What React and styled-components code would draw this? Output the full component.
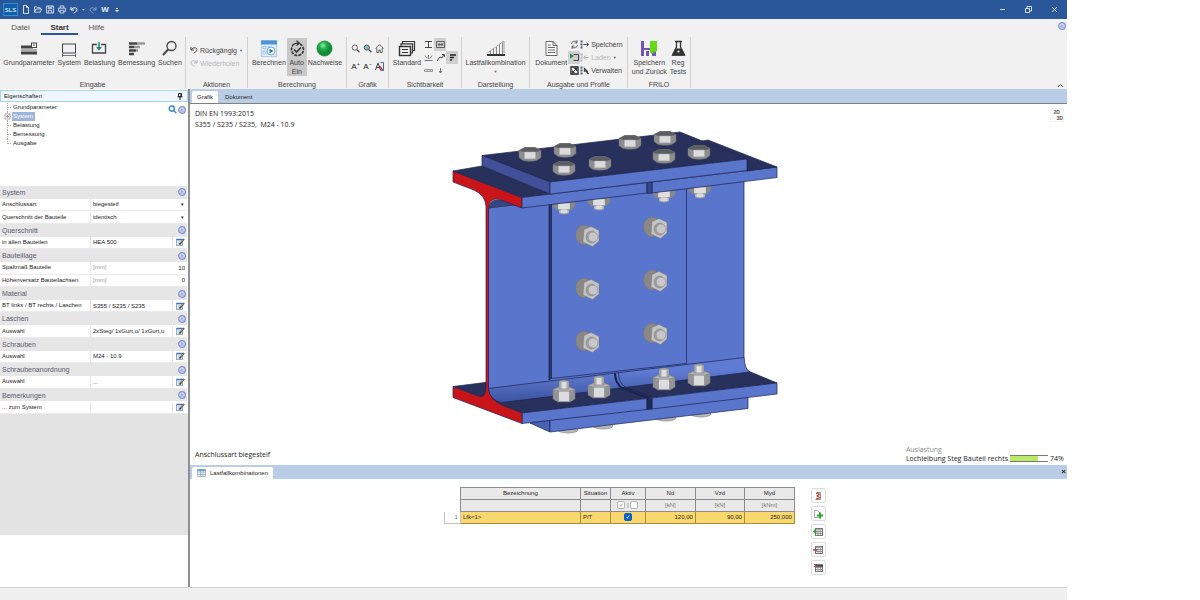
import React from "react";
import styled, { createGlobalStyle } from "styled-components";

const GlobalStyle = createGlobalStyle`
  * {
    box-sizing: border-box;
  }
  body {
    margin: 0;
    background: #ffffff;
    color: #222222;
    font: 6px/9px "Liberation Sans", Arial, sans-serif;
  }
  button, input, select {
    margin: 0;
    padding: 0;
    border: 0;
    border-radius: 0;
    background: transparent;
    color: inherit;
    font: inherit;
  }
  ul {
    margin: 0;
    padding: 0;
    list-style: none;
  }
  svg {
    display: block;
  }
`;

/* ---------- layout ---------- */

const Window = styled.div`
  display: flex;
  flex-direction: column;
  width: 88.9vw;
  min-height: 100vh;
  background: #ffffff;
`;

const TitleBar = styled.header`
  display: flex;
  align-items: center;
  gap: 4px;
  height: 19px;
  padding: 0 4px 0 3px;
  background: #2a579a;
  color: #e8eef8;
`;

const Logo = styled.div`
  width: 15px;
  height: 13px;
  border: 1px solid #2f8fd0;
  background: #0f5fa8;
  color: #ffffff;
  font-size: 6px;
  line-height: 12px;
  text-align: center;
`;

const TitleButton = styled.button`
  display: flex;
  align-items: center;
  justify-content: center;
  width: ${(props) => props.$width || 8}px;
  height: 13px;
  opacity: ${(props) => (props.$faded ? 0.45 : 1)};
  font-size: 8px;
  font-weight: bold;
`;

const WindowButtons = styled.div`
  display: flex;
  margin-left: auto;
`;

const Ribbon = styled.div`
  background: #f1f1f1;
`;

const RibbonTabs = styled.nav`
  display: flex;
  align-items: center;
  height: 17px;
  padding-right: 1px;
`;

const RibbonTab = styled.a`
  width: ${(props) => (props.$active ? 37 : 41)}px;
  height: 15px;
  border-bottom: 2px solid ${(props) => (props.$active ? "#2a579a" : "transparent")};
  color: ${(props) => (props.$active ? "#333333" : "#555555")};
  font-size: 8px;
  font-weight: ${(props) => (props.$active ? "bold" : "normal")};
  line-height: 15px;
  text-align: center;
  text-decoration: none;

  &:last-of-type {
    width: 37px;
  }
`;

const RibbonHelp = styled.button`
  margin: 0 0 3px auto;
`;

const Groups = styled.div`
  display: flex;
  height: 53px;
  padding-top: 1px;
`;

const Group = styled.section`
  display: flex;
  flex-direction: column;
  width: ${(props) => props.$width}px;
  height: 51px;
  border-right: 1px solid #d0d0d0;
`;

const GroupBody = styled.div`
  display: flex;
  flex: 1;
  justify-content: center;
  gap: ${(props) => props.$gap || 0}px;
  padding-top: 1px;
`;

const GroupLabel = styled.div`
  height: 9px;
  margin-bottom: -1px;
  color: #444444;
  font-size: 7px;
  text-align: center;
`;

const BigButton = styled.button`
  display: flex;
  flex-direction: column;
  align-items: center;
  height: 38px;
  padding: 2px 1px 0;
  background: ${(props) => (props.$active ? "#c8c8c8" : "transparent")};
  color: #444444;
  font-size: 7px;
  line-height: 9px;
  white-space: pre;

  svg {
    margin-bottom: 1px;
  }
`;

const ButtonStack = styled.div`
  display: flex;
  flex-direction: column;
  gap: 1px;
  padding-top: ${(props) => props.$top || 0}px;
`;

const SmallButton = styled.button`
  display: flex;
  align-items: center;
  gap: 2px;
  height: 12px;
  color: ${(props) => (props.$faded ? "#b8b8b8" : "#444444")};
  font-size: 7px;
  white-space: pre;
`;

const DropMark = styled.span`
  color: #666666;
  font-size: 4px;
  line-height: 9px;
`;

const IconGrid = styled.div`
  display: grid;
  grid-template-columns: repeat(${(props) => props.$columns}, 12px);
  grid-auto-rows: ${(props) => props.$row || 13}px;
  align-content: start;
  padding-top: ${(props) => props.$top || 0}px;
`;

const IconButton = styled.button`
  display: flex;
  align-items: center;
  justify-content: center;
  background: ${(props) => (props.$active ? "#cfcfcf" : "transparent")};
  font-size: 8px;
`;

const CollapseButton = styled.button`
  align-self: flex-end;
  margin: 0 3px 0 auto;
`;

const Workspace = styled.div`
  display: flex;
  flex: 1;
`;

const Sidebar = styled.aside`
  display: flex;
  flex-direction: column;
  width: 190px;
  border-right: 2px solid #909090;
`;

const SidebarTitle = styled.div`
  display: flex;
  align-items: center;
  justify-content: space-between;
  height: 12px;
  margin-top: 1px;
  padding: 0 4px 0 3px;
  border: 1px solid #a9d4f0;
  background: #eff7fd;
`;

const TreeArea = styled.div`
  display: flex;
  justify-content: space-between;
  height: 84px;
  padding: 1px 2px 0 3px;
`;

const TreeItem = styled.li`
  display: flex;
  align-items: center;
  height: 9px;

  a {
    padding: 0 2px 0 1px;
    background: ${(props) => (props.$open ? "#9fb4dc" : "transparent")};
    color: ${(props) => (props.$open ? "#ffffff" : "inherit")};
    text-decoration: none;
  }
`;

const TreeTools = styled.div`
  display: flex;
  gap: 1px;
  height: 9px;
  margin-top: 2px;
`;

const PropertyList = styled.form`
  display: flex;
  flex-direction: column;
  height: 228px;
  padding-right: 1px;
`;

const SectionHead = styled.div`
  display: flex;
  flex: 9;
  align-items: center;
  justify-content: space-between;
  padding: 0 1px 0 2px;
  background: #e6e6e6;
  color: #5a5a70;
  font-size: 7px;
`;

const PropertyRow = styled.div`
  display: grid;
  flex: 8;
  grid-template-columns: 90px 1fr auto;
  align-items: center;
  border-bottom: 1px solid #eaeaea;

  label {
    padding-left: 2px;
    white-space: nowrap;
  }
`;

const ValueInput = styled.input`
  width: 100%;
  min-width: 0;
  height: 11px;
  padding: 0 2px;
  border-left: 1px solid #e6e6e6;
  text-align: ${(props) => (props.$right ? "right" : "left")};
`;

const ValueSelect = styled.select`
  width: 100%;
  height: 11px;
  padding: 0 2px;
  border-left: 1px solid #e6e6e6;
  appearance: none;
`;

const UnitField = styled.div`
  display: grid;
  grid-template-columns: 24px 1fr;
  align-items: center;
  border-left: 1px solid #e6e6e6;

  span {
    padding-left: 2px;
    color: #999999;
  }
  input {
    border: 0;
  }
`;

const RowButton = styled.button`
  display: flex;
  align-items: center;
  justify-content: center;
  width: 15px;
  height: 11px;
  border-left: 1px solid #e6e6e6;
`;

const Arrow = styled.span`
  width: 9px;
  font-size: 5px;
  text-align: center;
`;

const SidebarFill = styled.div`
  height: 121px;
  background: #e3e3e3;
`;

const Main = styled.main`
  display: flex;
  flex: 1;
  flex-direction: column;
  min-width: 0;
`;

const TabStrip = styled.div`
  display: flex;
  align-items: flex-end;
  gap: 2px;
  height: 14px;
  padding: 0 1px 0 2px;
  background: #b9cde7;
`;

const DocTab = styled.button`
  display: flex;
  align-items: center;
  gap: 4px;
  height: 12px;
  padding: 0 5px;
  border-radius: 2px 2px 0 0;
  background: ${(props) => (props.$active ? "#ffffff" : "transparent")};
`;

const StripClose = styled.button`
  margin-left: auto;
  font-size: 8px;
  font-weight: bold;
  line-height: 14px;
`;

/* Drawing, captions and view button all share the one grid cell. */
const Canvas = styled.div`
  display: grid;
  flex: 1;
  grid-template: 1fr / 1fr;
  padding: 4px 3px 2px 5px;
  border-top: 1px solid #808080;
  font-family: "Open Sans", sans-serif;
  font-size: 7px;
  line-height: 10px;

  > * {
    grid-area: 1 / 1;
  }
`;

const CanvasTitle = styled.div`
  line-height: 11px;
`;

const Drawing = styled.svg`
  align-self: start;
  justify-self: center;
  margin: 17px 28px 0 0;
`;

const CanvasCaption = styled.div`
  align-self: end;
  padding-bottom: 3px;
`;

const Utilisation = styled.div`
  display: grid;
  grid-template-columns: auto 38px auto;
  align-self: end;
  align-items: center;
  justify-self: end;
  column-gap: 2px;
  line-height: 9px;
`;

const UtilisationTitle = styled.div`
  grid-column: 1 / -1;
  color: #8a8a8a;
`;

const Bar = styled.div`
  height: 7px;
  border: solid #777777;
  border-width: 1px 0;

  div {
    height: 5px;
    background: #b9ec62;
  }
`;

const ViewButton = styled.button`
  display: flex;
  flex-direction: column;
  align-self: start;
  justify-self: end;
  width: 14px;
  border: 1px solid #f2f2f2;
  background: #fcfcf8;
  color: #555555;
  font: bold 5px/6px "Liberation Sans", sans-serif;

  span + span {
    align-self: flex-end;
  }
`;

const TablePanel = styled.div`
  display: flex;
  align-items: flex-start;
  justify-content: center;
  gap: 16px;
  min-height: 108px;
  padding: 8px 0 0 13px;
`;

const LoadTable = styled.table`
  border-collapse: collapse;
  table-layout: fixed;
  width: 350px;

  th,
  td {
    height: 12px;
    padding: 0 2px;
    border: 1px solid #8c8c8c;
    line-height: 11px;
    font-weight: normal;
    vertical-align: middle;
    white-space: nowrap;
  }
  th {
    background: #e9e9e9;
  }
  tr + tr th {
    color: #777777;
  }
  th.blank {
    border-top-color: transparent;
    border-left-color: transparent;
    border-bottom-color: transparent;
    background: transparent;
  }
  td {
    border-color: #a98a3a;
    background: #f9d86f;
  }
  td.index {
    border-color: #c4c4c4;
    background: #ffffff;
    color: #777777;
    text-align: right;
  }
`;

const NumberCell = styled.td`
  text-align: right;
`;

const CheckCell = styled.td`
  text-align: center;
`;

const CheckBox = styled.input`
  width: 8px;
  height: 8px;
  border: 1px solid #b4b4b4;
  border-radius: 2px;
  background: #ffffff;
  appearance: none;
  vertical-align: middle;

  &:checked {
    border-color: ${(props) => (props.$blue ? "#0a62c4" : "#b4b4b4")};
    background: ${(props) => (props.$blue ? "#0a62c4" : "#ffffff")};
    color: ${(props) => (props.$blue ? "#ffffff" : "#888888")};
  }
  &:checked::after {
    content: "✓";
    display: block;
    font: 6px/6px "DejaVu Sans", sans-serif;
    text-align: center;
  }
`;

const TableTools = styled.div`
  display: flex;
  flex-direction: column;
  gap: 3px;
  padding-top: 1px;
`;

const ToolButton = styled.button`
  display: flex;
  align-items: center;
  justify-content: center;
  width: 15px;
  height: 15px;
  border: 1px solid #dcdcdc;
  border-radius: 2px;
`;

const StatusBar = styled.footer`
  height: 13px;
  border-top: 1px solid #d0d0d0;
  background: #f0f0f0;
`;

/* ---------- icons ---------- */

const Icon = ({ w = 9, h = w, box = `0 0 ${w} ${h}`, color = "#444444", children }) => (
  <svg width={w} height={h} viewBox={box} fill="none" stroke={color} strokeWidth="1" aria-hidden="true">
    {children}
  </svg>
);

const HelpIcon = () => (
  <Icon w={8} color="#7f90cf">
    <circle cx="4" cy="4" r="3.3" fill="#d3daf3" strokeWidth="1.2" />
    <path d="M2.6 4.2 4 2.8 5.4 4.2M2.6 5.8 4 4.4 5.4 5.8" strokeWidth=".8" />
  </Icon>
);

const EditIcon = () => (
  <Icon w={9} h={8} color="#8fa9cc">
    <rect x=".5" y="1.5" width="6" height="6" fill="#e4edf8" />
    <path d="M.5 1.500h6" stroke="#3b78c0" strokeWidth="1.5" />
    <path d="M2 4h3M2 6h2" strokeWidth=".6" />
    <path d="M3.500 6.500 8 1" stroke="#444444" strokeWidth="1.8" />
    <path d="M4.500 5 7.400 1.600" stroke="#d9b13b" strokeWidth=".9" />
  </Icon>
);

/* dotted branch in front of a tree entry, with the expander box if it has children */
const Branch = ({ open, last }) => (
  <Icon w={9} color="#aaaaaa">
    <path d={`M4.500 0V${last ? 5 : 9}M5 4.500h4`} strokeDasharray="1 1" />
    {open && <path d="M2 2h5v5H2zM3 4.500h3M4.500 3v3" fill="#ffffff" stroke="#888888" strokeWidth=".7" />}
  </Icon>
);

const UndoIcon = ({ color, flip }) => (
  <Icon w={8} color={color}>
    <path
      d="M1 1v3h3M1.2 3.8C3 1 7 1.2 7 3.8 7 5.5 5 6 3.6 7.3"
      transform={flip ? "matrix(-1 0 0 1 8 0)" : undefined}
    />
  </Icon>
);

const SearchIcon = ({ color, fill = "none", bold }) => (
  <Icon w={9} color={color}>
    <circle cx="3.800" cy="3.600" r="2.600" fill={fill} strokeWidth={bold ? 1.4 : 0.8} />
    <path d="m5.800 5.600 2.600 2.600" strokeWidth="1.300" />
  </Icon>
);

const GridTable = ({ children }) => (
  <Icon w={10} color="#777777">
    <rect x="2.500" y="1.500" width="7" height="7" fill="#ffffff" />
    <path d="M2.500 2.400h7M2.500 4.500h7M2.500 6.500h7M5 3v5.500M7.300 3v5.500" strokeWidth=".7" />
    {children}
  </Icon>
);

const ProfileIcon = ({ kind, color = "#444444" }) => (
  <Icon w={9} color={color}>
    <path d="M1.500.5v8" strokeWidth="2" strokeDasharray="2 1" stroke={color === "#444444" ? "#47617a" : color} />
    {kind === "save" && <path d="M3.500 4.500h5M6.500 2.500l2 2-2 2" />}
    {kind === "load" && <path d="M3.500 4.500h5M5.800 2.500l-2 2 2 2" />}
    {kind === "manage" && <path d="m4.500 3 4 5M4.500 2.500v2.500h2.500z" strokeWidth="1.300" />}
  </Icon>
);

/* ---------- 3D view ---------- */

const headBolts = [[530, 154], [565, 150], [630, 142], [665, 138], [564, 168], [600, 163], [664, 156], [699, 152]];
const upperNuts = [[564, 209], [599, 205], [664, 197], [700, 193]];
const lowerNuts = [[564, 391], [599, 387], [664, 379], [699, 375]];
const webBolts = [[588, 236], [588, 289], [588, 342], [656, 228], [656, 281], [656, 334]];
const footBolts = [[568, 430], [603, 426], [666, 418], [701, 414]];

const HeadBolt = ({ x, y }) => (
  <g transform={`translate(${x} ${y})`} stroke="#68686a" strokeWidth=".5">
    <path d="M-11-3.500-5-6.500H5L11-3.500V3.500L7 6.500C3 7.600-3 7.600-7 6.500L-11 3.500Z" fill="#8e8e90" />
    <path d="M-11-3.500-5-6.500H5L11-3.500 6-2H-6Z" fill="#5c5d60" />
    <path d="M-5.500-2H5.500V4.800H-5.500Z" fill="#dcdcde" stroke="#aaaaaa" />
  </g>
);

const UpperNut = ({ x, y }) => (
  <g transform={`translate(${x} ${y})`} stroke="#8a8a8c" strokeWidth=".4">
    <path d="M-11-5 11-8 11-3 8 .5H-8L-11-2Z" fill="#88888a" />
    <path d="M-6-6H6V.5H-6Z" fill="#e0e0e2" />
    <path d="M-5 .5H5V4C3 5.500-3 5.500-5 4Z" fill="#bdbdbf" />
    <path d="M-3 .5H3V4H-3Z" fill="#dcdcde" stroke="none" />
  </g>
);

const LowerNut = ({ x, y }) => (
  <g transform={`translate(${x} ${y})`} stroke="#7c7c7e" strokeWidth=".5">
    <path d="M-11-1.500-5-4H5L11-1.500V8L6 11H-6L-11 8Z" fill="#949496" />
    <path d="M-5.500 0H5.500V10.500H-5.500Z" fill="#dcdcde" />
    <path d="M-11-1.500-5-4H5L11-1.500 6 0H-6Z" fill="#b4b4b6" />
    <path d="M-5-2V-9.500C-3-11.500 3-11.500 5-9.500V-2Z" fill="#a9a9ab" />
    <path d="M-2.500-2.500V-9H2.500V-2.500Z" fill="#dededf" stroke="none" />
  </g>
);

const WebBolt = ({ x, y }) => (
  <g transform={`translate(${x} ${y})`} stroke="#6f6f72" strokeWidth=".4">
    <ellipse cx="-4" cy="-1" rx="8.500" ry="10" fill="#8b8787" />
    <path d="M-4-6.500 3-9.500 11-5.500V5L4.500 10.500-5 6Z" fill="#c5c5c3" />
    <ellipse cx="3.500" cy="1" rx="5.500" ry="6" fill="#a0a0a2" />
    <circle cx="5" cy="1" r="4.900" fill="#c8c8ca" />
  </g>
);

const BeamDrawing = () => (
  <Drawing width="326" height="312" viewBox="452 125 326 312" stroke="#1b2450" strokeWidth=".7" strokeLinejoin="round">
    <defs>
      <linearGradient id="fillet" x1="0" y1="0" x2="0.1" y2="1">
        <stop offset="0.35" stopColor="#5f7bd3" />
        <stop offset="1" stopColor="#3d539f" />
      </linearGradient>
    </defs>
    {/* bottom splice plate */}
    {footBolts.map(([x, y]) => (
      <ellipse key={x} cx={x} cy={y} rx="10" ry="3" fill="#b8b8ba" stroke="#88888a" />
    ))}
    <path d="M530 423 550 420V432Z" fill="#4961b5" />
    <path d="M550 420 748 396V408.500L550 432Z" fill="#5a75cc" />
    {/* bottom flange */}
    <path d="M453 386.500 489 382 748 371 777 383 522 413Z" fill="#28315c" />
    <path d="M522 413 647 398.500V409.500L522 423.500Z" fill="#5a75cc" />
    <path d="M652 398 777 383V394L652 409Z" fill="#5a75cc" />
    <path d="M647 398.500 652 398V409L647 409.500Z" fill="#1f2a57" />
    {/* web */}
    <path d="M488 208 744 178V360L488 390Z" fill="#5a75cc" />
    <path d="M488 388.500 744 357.500Q745 370 750 372L502 402.500Q490 401 488 388.500Z" fill="url(#fillet)" />
    <path d="M615 373Q615 383 622 388L649 398.500" fill="none" strokeWidth="2" />
    <path d="M618.500 372.500Q618.500 382 625 387L652 397" fill="none" />
    {/* web splice plate */}
    <path d="M549 200H551.500V378.500L549 380Z" fill="#293566" />
    <path d="M551.500 199 686.500 186V363.500L551.500 378.500Z" fill="#5a75cc" />
    {/* upper fillet */}
    <path d="M489 207.500Q490 199 501 200L522 207.500V204Z" fill="#4055a5" />
    <path d="M489 207.500 522 203.500V207.500L500 200Q491 198 489 207.500Z" fill="#334583" stroke="none" />
    {/* end section */}
    <path
      d="M453 171 522 197.500V208L501 200Q489 196 488.500 210V390Q490 400 504 406L522 413V423.500L453 397.500V386.500L479 396.500Q486 398 486 386V206Q485 195 474 190L453 182Z"
      fill="#c9151a"
    />
    {upperNuts.map(([x, y]) => (
      <UpperNut key={x} x={x} y={y} />
    ))}
    {/* top flange */}
    <path d="M453 171 482 166 550 194 522 197.500Z" fill="#28315c" />
    <path d="M522 197.500 647 182.500V193L522 208Z" fill="#5a75cc" />
    <path d="M652 182 777 167V177.500L652 193Z" fill="#5a75cc" />
    <path d="M647 182.500 652 182V193L647 193.500Z" fill="#354687" />
    <path d="M702 141 708 140 777 167 747 171V159Z" fill="#28315c" />
    {/* top splice plate */}
    <path d="M482 155.500 680 132 747 159 550 182Z" fill="#28315c" />
    <path d="M482 155.500 550 182V194L482 166Z" fill="#42509a" />
    <path d="M550 182 747 159V170.500L550 194Z" fill="#5a75cc" />
    {headBolts.map(([x, y]) => (
      <HeadBolt key={x + "-" + y} x={x} y={y} />
    ))}
    {webBolts.map(([x, y]) => (
      <WebBolt key={x + "-" + y} x={x} y={y} />
    ))}
    {lowerNuts.map(([x, y]) => (
      <LowerNut key={x} x={x} y={y} />
    ))}
  </Drawing>
);

/* ---------- parts ---------- */

const Header = () => (
  <TitleBar>
    <Logo>SLS</Logo>
    <TitleButton aria-label="Neu">
      <Icon w={8} h={9} color="#ffffff"><path d="M1.500.5h3l2 2v6h-5zM4.500.5v2h2" strokeWidth=".8" /></Icon>
    </TitleButton>
    <TitleButton aria-label="Öffnen">
      <Icon w={9} color="#ffffff"><path d="M.5 7.500v-6h2.500l1 1h3v1.500M.5 7.500 2.300 4h6.200L7 7.500z" strokeWidth=".8" /></Icon>
    </TitleButton>
    <TitleButton aria-label="Speichern">
      <Icon w={9} color="#ffffff"><path d="M.5.5h8v8h-8zM2.500.5v3h4v-3M2.500 8.500v-3h4v3M3 2h3" strokeWidth=".8" /></Icon>
    </TitleButton>
    <TitleButton aria-label="Drucken">
      <Icon w={9} color="#ffffff"><path d="M2.500 3V.5h4V3M2.500 6.500h-2V3h8v3.500h-2M2.500 5.500h4v3h-4z" strokeWidth=".8" /></Icon>
    </TitleButton>
    <TitleButton aria-label="Rückgängig"><UndoIcon color="#ffffff" /></TitleButton>
    <TitleButton $width={3} aria-label="Rückgängig-Liste">
      <Icon w={3} color="none"><path d="M0 1h3L1.500 2.500z" fill="#ffffff" /></Icon>
    </TitleButton>
    <TitleButton $faded aria-label="Wiederholen"><UndoIcon color="#ffffff" flip /></TitleButton>
    <TitleButton>W</TitleButton>
    <TitleButton aria-label="Anpassen">
      <Icon w={4} color="none"><path d="M0 2h4L2 4zM1 0h2v1H1z" fill="#ffffff" /></Icon>
    </TitleButton>
    <WindowButtons>
      <TitleButton $width={16} aria-label="Minimieren">
        <Icon w={7} color="#ffffff"><path d="M1 3.500h5" strokeWidth=".8" /></Icon>
      </TitleButton>
      <TitleButton $width={36} aria-label="Verkleinern">
        <Icon w={7} color="#ffffff"><path d="M.5 2.500h4v4h-4zM2 2.500v-2h4.500v4.500h-2" strokeWidth=".8" /></Icon>
      </TitleButton>
      <TitleButton $width={16} aria-label="Schließen">
        <Icon w={7} color="#ffffff"><path d="m1 1 5 5M6 1 1 6" strokeWidth=".8" /></Icon>
      </TitleButton>
    </WindowButtons>
  </TitleBar>
);

const InputGroup = () => (
  <Group $width={186}>
    <GroupBody $gap={1}>
      <BigButton>
        <Icon w={18} h={17}>
          <path d="M1 7h12M1 13h16" strokeWidth="3" />
          <path d="M1 10h16" stroke="#999999" strokeWidth="1.500" />
          <rect x="11.500" y="3" width="5" height="4.500" fill="#ffffff" />
          <path d="M13 5h2" />
        </Icon>
        Grundparameter
      </BigButton>
      <BigButton>
        <Icon w={16} h={17}>
          <rect x="1.500" y="4" width="13" height="9" />
          <path d="M1 15.500h14M1.500 14v3M14.500 14v3" strokeWidth=".7" />
        </Icon>
        System
      </BigButton>
      <BigButton>
        <Icon w={16} h={17}>
          <path d="M6 4.500H1.500v8.500h13V4.500H10" strokeWidth="1.300" />
          <path d="M8 2v6" stroke="#178a80" strokeWidth="1.500" />
          <path d="M5 7h6l-3 3.500z" fill="#178a80" stroke="none" />
        </Icon>
        Belastung
      </BigButton>
      <BigButton>
        <Icon w={17} h={17}>
          <path d="M1 3.500h8M1 7h5M1 10.500h7M1 14h5" strokeWidth="2.500" />
          <path d="M9 3.500h8M6 7h6M8 10.500h2" stroke="#999999" strokeWidth="2.500" />
        </Icon>
        Bemessung
      </BigButton>
      <BigButton>
        <Icon w={17} h={17}>
          <circle cx="10.500" cy="6" r="4.500" strokeWidth="1.300" />
          <path d="M7.200 9.300 2 15" strokeWidth="2" />
        </Icon>
        Suchen
      </BigButton>
    </GroupBody>
    <GroupLabel>Eingabe</GroupLabel>
  </Group>
);

const SightGroup = () => (
  <Group $width={73}>
    <GroupBody>
      <BigButton>
        <Icon w={18} h={17} color="#333333">
          <path d="M4.500 3.500V1.500H16.500v9h-2M3 6V3.800H14.500V13h-2" strokeWidth="1.200" />
          <rect x="1.500" y="6.500" width="11" height="9" fill="#f1f1f1" strokeWidth="1.400" />
          <path d="M4 9.500h6M4 12.500h6" />
        </Icon>
        Standard
      </BigButton>
      <IconGrid $columns={3}>
        <IconButton aria-label="Profil"><Icon w={9}><path d="M1 1.500h7M1 7.500h7M4.500 1.500v6" /></Icon></IconButton>
        <IconButton $active aria-label="Bemaßung"><Icon w={9}><path d="M.5 1.500h8v6h-8zM2 4.500h5M3 3v3M6 3v3" strokeWidth=".8" /></Icon></IconButton>
        <span />
        <IconButton aria-label="Lager"><Icon w={9}><path d="M.5 7.500h8M4.500 6V2M3 5.500l-2-3M6 5.500l2-3" strokeWidth=".7" /></Icon></IconButton>
        <IconButton aria-label="Lasten"><Icon w={9}><path d="m1 8 3-4 2 1 2-4M6 1.500h2.500V4" /></Icon></IconButton>
        <IconButton $active aria-label="Ausnutzung"><Icon w={9} color="#222222"><path d="M2 2h6M2 4.500h4M2 7h2" strokeWidth="1.500" /></Icon></IconButton>
        <IconButton aria-label="Raster"><Icon w={9} color="#999999"><path d="M.5 3.500h8v2h-8zM3 3.500v2M6 3.500v2" /></Icon></IconButton>
        <IconButton aria-label="Achse"><Icon w={9} color="#777777"><path d="M4.500 2v5M3 5l1.500 2L6 5" /></Icon></IconButton>
      </IconGrid>
    </GroupBody>
    <GroupLabel>Sichtbarkeit</GroupLabel>
  </Group>
);

const OutputGroup = () => (
  <Group $width={98}>
    <GroupBody>
      <BigButton>
        <Icon w={15} h={17}>
          <path d="M2 1.500h7l4 4v10H2zM9 1.500v4h4" fill="#ffffff" strokeWidth=".8" />
          <path d="M4 5h3M4 7.500h7M4 10h7M4 12.500h7" strokeWidth=".8" />
        </Icon>
        Dokument
      </BigButton>
      <IconGrid $columns={1}>
        <IconButton aria-label="Aktualisieren"><Icon w={9}><path d="M1.500 4a3 3 0 0 1 5.500-1.500M7.500 5a3 3 0 0 1-5.500 1.500M7 0v3H4.500M2 9V6h2.500" strokeWidth=".8" /></Icon></IconButton>
        <IconButton $active aria-label="Ausschnitt"><Icon w={9}><path d="M3.500 1.500h5v6h-5" /><path d="M0 .5 4 3 0 5.500z" fill="#2a8a4a" stroke="none" /></Icon></IconButton>
        <IconButton aria-label="Vollbild"><Icon w={9} color="#222222"><path d="M1 1h7v7H1z" strokeWidth="1.300" /><path d="m2.500 6.500 4-4M4 2.500h2.500V5M2.500 4.500v2h2" strokeWidth=".9" /></Icon></IconButton>
      </IconGrid>
      <ButtonStack>
        <SmallButton><ProfileIcon kind="save" />Speichern</SmallButton>
        <SmallButton $faded><ProfileIcon kind="load" color="#b0b0b0" />Laden<DropMark>▼</DropMark></SmallButton>
        <SmallButton><ProfileIcon kind="manage" />Verwalten</SmallButton>
      </ButtonStack>
    </GroupBody>
    <GroupLabel>Ausgabe und Profile</GroupLabel>
  </Group>
);

const RibbonGroups = () => (
  <Groups>
    <InputGroup />
    <Group $width={62}>
      <GroupBody>
        <ButtonStack $top={6}>
          <SmallButton><UndoIcon />Rückgängig<DropMark>▼</DropMark></SmallButton>
          <SmallButton $faded><UndoIcon color="#b8b8b8" flip />Wiederholen</SmallButton>
        </ButtonStack>
      </GroupBody>
      <GroupLabel>Aktionen</GroupLabel>
    </Group>
    <Group $width={99}>
      <GroupBody>
        <BigButton>
          <Icon w={18} h={17} color="#4f93d5">
            <rect x="1.500" y=".5" width="15" height="16" fill="#e2effb" stroke="#a9cbec" />
            <path d="M1 2.500h16" strokeWidth="4" />
            <path d="M3 6.500h3v2H3zM7.500 6.500h3M3 11h3v3H3z" stroke="#8bb4df" strokeWidth=".7" />
            <circle cx="11" cy="11" r="4" fill="#ffffff" strokeWidth=".8" />
            <path d="m9.500 8.800 4 2.200-4 2.200z" fill="#1f6fb5" stroke="none" />
          </Icon>
          Berechnen
        </BigButton>
        <BigButton $active>
          <Icon w={18} h={17} color="#333333">
            <path d="M12 4a6 6 0 1 1-8 3" strokeWidth="1.600" strokeDasharray="3 1" />
            <path d="M4 6.500C5 4 7.500 3 11 3.200M8.500.8 11.500 3.200 8.500 5.600" strokeWidth="1.200" />
            <path d="m6 9.500 2.500 2.500L13 7.500" strokeWidth="1.600" />
          </Icon>
          {" Auto \nEin"}
        </BigButton>
        <BigButton>
          <Icon w={17} h={17} color="#1c7a3c">
            <defs>
              <radialGradient id="ball" cx=".4" cy=".3">
                <stop offset="0" stopColor="#8ff0a5" />
                <stop offset=".5" stopColor="#1fae4a" />
                <stop offset="1" stopColor="#128a35" />
              </radialGradient>
            </defs>
            <circle cx="8.500" cy="8.500" r="7.600" fill="url(#ball)" strokeWidth=".6" />
          </Icon>
          Nachweise
        </BigButton>
      </GroupBody>
      <GroupLabel>Berechnung</GroupLabel>
    </Group>
    <Group $width={42}>
      <GroupBody>
        <IconGrid $columns={3} $row={18} $top={1}>
          <IconButton aria-label="Lupe"><SearchIcon /></IconButton>
          <IconButton aria-label="Zoom"><SearchIcon fill="#7fb8c8" /></IconButton>
          <IconButton aria-label="Alles"><Icon w={9}><path d="m.5 4.500 4-4 4 4M1.800 4v4.500h2V6h1.400v2.500h2V4" strokeWidth=".8" /></Icon></IconButton>
          <IconButton>A⁺</IconButton>
          <IconButton>A⁻</IconButton>
          <IconButton aria-label="Schrift"><Icon w={9}><path d="M.5 8 3 1l2.500 7M1.500 5.500h3" /><path d="M5.500.5h3v8h-3" stroke="#456aa8" /><path d="m4.500 4 3 4" stroke="#c73a3a" strokeWidth="1.500" /></Icon></IconButton>
        </IconGrid>
      </GroupBody>
      <GroupLabel>Grafik</GroupLabel>
    </Group>
    <SightGroup />
    <Group $width={68}>
      <GroupBody>
        <BigButton>
          <Icon w={18} h={17} color="#888888">
            <path d="M1 12.500 17 1v12" strokeWidth=".7" />
            <path d="M3.500 11v3M6.500 9v5M9.500 7v7M12.500 4.500V14M15.500 2.500V14" />
            <path d="M0 15h18" stroke="#333333" strokeWidth="2" />
          </Icon>
          Lastfallkombination
          <DropMark>▼</DropMark>
        </BigButton>
      </GroupBody>
      <GroupLabel>Darstellung</GroupLabel>
    </Group>
    <OutputGroup />
    <Group $width={63}>
      <GroupBody $gap={1}>
        <BigButton>
          <Icon w={18} h={17} color="none">
            <path d="M1 1h3v7h8V1h4v15H1z" fill="#7455b5" />
            <path d="M4 10h8v6H4z" fill="#ffffff" />
            <path d="M6 11h3v5H6z" fill="#7455b5" />
            <path d="M10 1h7v10l-6 3-1-2z" fill="#65d818" />
          </Icon>
          {"Speichern\nund Zurück"}
        </BigButton>
        <BigButton>
          <Icon w={15} h={17} color="#333333">
            <path d="M4 1.500h7M5.500 2v5L1.500 15h12l-4-8V2" strokeWidth="1.300" />
            <path d="M4.500 9h6l3 6h-12z" fill="#333333" />
            <circle cx="7.500" cy="11.500" r="1" fill="#ffffff" stroke="none" />
          </Icon>
          {"Reg\nTests"}
        </BigButton>
      </GroupBody>
      <GroupLabel>FRILO</GroupLabel>
    </Group>
    <CollapseButton aria-label="Menüband reduzieren">
      <Icon w={7}><path d="m1 5 2.500-2.500L6 5" /></Icon>
    </CollapseButton>
  </Groups>
);

const treeItems = ["Grundparameter", "System", "Belastung", "Bemessung", "Ausgabe"];

const properties = [
  { head: "System" },
  { label: "Anschlussart", value: "biegesteif", type: "select" },
  { label: "Querschnitt der Bauteile", value: "identisch", type: "select" },
  { head: "Querschnitt" },
  { label: "in allen Bauteilen", value: "HEA 500", type: "edit" },
  { head: "Bauteillage" },
  { label: "Spaltmaß Bauteile", value: "10", type: "unit" },
  { label: "Höhenversatz Bauteilachsen", value: "0", type: "unit" },
  { head: "Material" },
  { label: "BT links / BT rechts / Laschen", value: "S355 / S235 / S235", type: "edit" },
  { head: "Laschen" },
  { label: "Auswahl", value: "2xSteg/ 1xGurt,o/ 1xGurt,u", type: "edit" },
  { head: "Schrauben" },
  { label: "Auswahl", value: "M24 - 10.9", type: "edit" },
  { head: "Schraubenanordnung" },
  { label: "Auswahl", value: "...", type: "edit" },
  { head: "Bemerkungen" },
  { label: "... zum System", value: "", type: "edit" },
];

const Property = ({ id, label, value, type }) => (
  <PropertyRow>
    <label htmlFor={id}>{label}</label>
    {type === "select" && (
      <>
        <ValueSelect id={id}><option>{value}</option></ValueSelect>
        <Arrow>▾</Arrow>
      </>
    )}
    {type === "edit" && (
      <>
        <ValueInput id={id} defaultValue={value} />
        <RowButton type="button" aria-label={`${label} bearbeiten`}><EditIcon /></RowButton>
      </>
    )}
    {type === "unit" && (
      <UnitField>
        <span>[mm]</span>
        <ValueInput id={id} defaultValue={value} $right />
      </UnitField>
    )}
  </PropertyRow>
);

const PropertyPanel = () => (
  <Sidebar>
    <SidebarTitle>
      Eigenschaften
      <Icon w={6} h={7} color="#222222"><path d="M1.500.5h3v3h-3zM.5 3.800h5M3 4v3M4 .5v3" /></Icon>
    </SidebarTitle>
    <TreeArea>
      <ul>
        {treeItems.map((item, index) => (
          <TreeItem key={item} $open={item === "System"}>
            <Branch open={item === "System"} last={index === treeItems.length - 1} />
            <a href="#tree">{item}</a>
          </TreeItem>
        ))}
      </ul>
      <TreeTools>
        <button aria-label="Suchen"><SearchIcon color="#2f86cc" bold /></button>
        <button aria-label="Hilfe"><HelpIcon /></button>
      </TreeTools>
    </TreeArea>
    <PropertyList>
      {properties.map((p, index) =>
        p.head ? (
          <SectionHead key={index}>
            {p.head}
            <HelpIcon />
          </SectionHead>
        ) : (
          <Property key={index} id={`prop-${index}`} {...p} />
        )
      )}
    </PropertyList>
    <SidebarFill />
  </Sidebar>
);

const View = ({ percent = 74 }) => (
  <Canvas>
    <BeamDrawing />
    <CanvasTitle>
      DIN EN 1993:2015
      <br />
      S355 / S235 / S235,&nbsp; M24 - 10.9
    </CanvasTitle>
    <ViewButton><span>2D</span><span>3D</span></ViewButton>
    <CanvasCaption>Anschlussart biegesteif</CanvasCaption>
    <Utilisation>
      <UtilisationTitle>Auslastung</UtilisationTitle>
      <span>Lochleibung Steg Bauteil rechts</span>
      <Bar><div style={{ width: `${percent}%` }} /></Bar>
      <span>{percent}%</span>
    </Utilisation>
  </Canvas>
);

const LoadCases = () => (
  <TablePanel>
    <LoadTable>
      <colgroup>
        {[16, 120, 30, 35, 50, 49, 50].map((width, index) => (
          <col key={index} width={width} />
        ))}
      </colgroup>
      <thead>
        <tr>
          <th className="blank" />
          <th>Bezeichnung</th>
          <th>Situation</th>
          <th>Aktiv</th>
          <th>Nd</th>
          <th>Vzd</th>
          <th>Myd</th>
        </tr>
        <tr>
          <th className="blank" />
          <th />
          <th />
          <th>
            <CheckBox type="checkbox" defaultChecked aria-label="Alle aktivieren" /> |{" "}
            <CheckBox type="checkbox" aria-label="Alle deaktivieren" />
          </th>
          <th>[kN]</th>
          <th>[kN]</th>
          <th>[kNm]</th>
        </tr>
      </thead>
      <tbody>
        <tr>
          <td className="index">1</td>
          <td>Lfk&lt;1&gt;</td>
          <td>P/T</td>
          <CheckCell><CheckBox type="checkbox" defaultChecked $blue aria-label="Aktiv" /></CheckCell>
          <NumberCell>120,00</NumberCell>
          <NumberCell>90,00</NumberCell>
          <NumberCell>250,000</NumberCell>
        </tr>
      </tbody>
    </LoadTable>
    <TableTools>
      <ToolButton aria-label="Übernehmen">
        <Icon w={10}><path d="M3.500 1.500h4v7h-5" stroke="#7d9bc4" /><path d="M3 2.500c4-1 4 2.500.5 2.500C7.500 5 6.500 9 3 7.500" stroke="#d8562f" strokeWidth="1.500" /></Icon>
      </ToolButton>
      <ToolButton aria-label="Neue Zeile">
        <Icon w={10}><path d="M1.500 1.500h3l2 2v5h-5z" stroke="#999999" strokeWidth=".8" /><path d="M4 6.500h6M7 3.500v6" stroke="#2fa52f" strokeWidth="2" /></Icon>
      </ToolButton>
      <ToolButton aria-label="Zeile einfügen">
        <GridTable><path d="M0 4.500h4M2 2.500v4" stroke="#2fa52f" strokeWidth="1.500" /></GridTable>
      </ToolButton>
      <ToolButton aria-label="Zeile löschen">
        <GridTable><path d="M0 5h4.500" stroke="#d02f3f" strokeWidth="1.500" /></GridTable>
      </ToolButton>
      <ToolButton aria-label="Tabelle leeren">
        <GridTable><path d="M3 3h7" stroke="#333333" strokeWidth="1.500" /><path d="m1 1 3 3M4 1 1 4" stroke="#d02f3f" /></GridTable>
      </ToolButton>
    </TableTools>
  </TablePanel>
);

const App = () => {
  return (
    <Window>
      <GlobalStyle />
      <Header />
      <Ribbon>
        <RibbonTabs>
          <RibbonTab href="#datei">Datei</RibbonTab>
          <RibbonTab href="#start" $active>Start</RibbonTab>
          <RibbonTab href="#hilfe">Hilfe</RibbonTab>
          <RibbonHelp aria-label="Hilfe"><HelpIcon /></RibbonHelp>
        </RibbonTabs>
        <RibbonGroups />
      </Ribbon>
      <Workspace>
        <PropertyPanel />
        <Main>
          <TabStrip>
            <DocTab $active>Grafik</DocTab>
            <DocTab>Dokument</DocTab>
          </TabStrip>
          <View />
          <TabStrip>
            <DocTab $active>
              <Icon w={9} h={8} color="#7f9fc9"><path d="M.5.5h8v7h-8zM.5 3h8M.5 5.500h8M3.500 1v6.500M6 1v6.500" strokeWidth=".7" /><path d="M.5 1.200h8" stroke="#3c78c0" /></Icon>
              Lastfallkombinationen
            </DocTab>
            <StripClose aria-label="Schließen">×</StripClose>
          </TabStrip>
          <LoadCases />
        </Main>
      </Workspace>
      <StatusBar />
    </Window>
  );
};

export default App;
